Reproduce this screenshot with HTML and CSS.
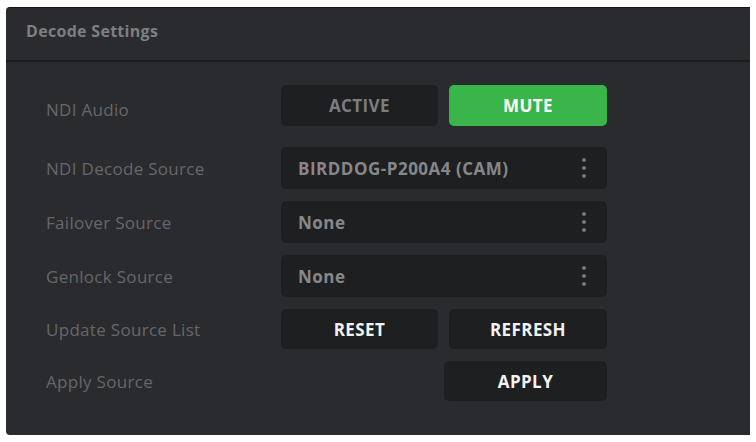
FILE: index.html
```html
<!DOCTYPE html>
<html lang="en">
<head>
    <meta charset="UTF-8">
    <meta name="viewport" content="width=device-width, initial-scale=1.0">
    <title>Decode Settings</title>
    <link rel="stylesheet" href="styles.css">
</head>
<body>
    <div class="panel">
        <div class="panel-header">Decode Settings</div>

        <div class="settings">
            <div class="row first">
                <span class="label">NDI Audio</span>
                <div class="pair">
                    <button class="btn">ACTIVE</button>
                    <button class="btn on">MUTE</button>
                </div>
            </div>

            <div class="row">
                <span class="label">NDI Decode Source</span>
                <div class="select">
                    <span>BIRDDOG-P200A4 (CAM)</span>
                    <span class="kebab"><i></i><i></i><i></i></span>
                </div>
            </div>

            <div class="row">
                <span class="label">Failover Source</span>
                <div class="select">
                    <span>None</span>
                    <span class="kebab"><i></i><i></i><i></i></span>
                </div>
            </div>

            <div class="row">
                <span class="label">Genlock Source</span>
                <div class="select">
                    <span>None</span>
                    <span class="kebab"><i></i><i></i><i></i></span>
                </div>
            </div>

            <div class="row short">
                <span class="label">Update Source List</span>
                <div class="pair">
                    <button class="btn white">RESET</button>
                    <button class="btn white">REFRESH</button>
                </div>
            </div>

            <div class="row short">
                <span class="label">Apply Source</span>
                <div class="pair single">
                    <button class="btn white apply">APPLY</button>
                </div>
            </div>
        </div>
    </div>
</body>
</html>
```

FILE: styles.css
```css
* {
    box-sizing: border-box;
}

body {
    margin: 0;
    background: #ffffff;
    font-family: 'Open Sans', sans-serif;
}

.panel {
    margin: 7px 6px 0 6px;
    height: 428px;
    background: #2a2b2e;
    border-top: 1px solid #141516;
    border-radius: 4px 0 0 4px;
}

.panel-header {
    height: 54px;
    padding: 12px 20px 0 20px;
    font-size: 16px;
    font-weight: 700;
    letter-spacing: 0.3px;
    color: #7e7f82;
    border-bottom: 2px solid #1b1c1e;
}

.settings {
    padding: 23px 0 0 40px;
    display: flex;
    flex-direction: column;
    gap: 12px;
}

.row {
    display: flex;
    align-items: center;
    height: 42px;
}

.row.first {
    height: 41px;
    margin-bottom: 9px;
}

.row.first .label {
    padding-top: 8px;
}

.row.short {
    height: 40px;
}

.label {
    width: 235px;
    font-size: 17px;
    font-weight: 400;
    letter-spacing: 0.3px;
    color: #66676a;
}

.pair {
    width: 326px;
    height: 100%;
    display: grid;
    grid-template-columns: 157px 158px;
    gap: 11px;
}

.pair.single {
    display: flex;
    justify-content: flex-end;
}

.btn {
    height: 100%;
    border: none;
    border-radius: 5px;
    background: #1e1f21;
    color: #7c7d80;
    font-family: 'Open Sans', sans-serif;
    font-size: 17px;
    font-weight: 700;
    letter-spacing: 0.4px;
    cursor: pointer;
}

.btn.on {
    background: #3ab54a;
    color: #ffffff;
}

.btn.white {
    color: #f2f2f2;
}

.btn.apply {
    width: 163px;
}

.select {
    width: 326px;
    height: 100%;
    display: flex;
    align-items: center;
    justify-content: space-between;
    padding: 0 21px 0 17px;
    border-radius: 5px;
    background: #1e1f21;
    color: #86878a;
    font-size: 17px;
    font-weight: 700;
    letter-spacing: 0.5px;
}

.kebab {
    display: flex;
    flex-direction: column;
    gap: 4px;
}

.kebab i {
    width: 4px;
    height: 4px;
    border-radius: 50%;
    background: #77787b;
}
```
